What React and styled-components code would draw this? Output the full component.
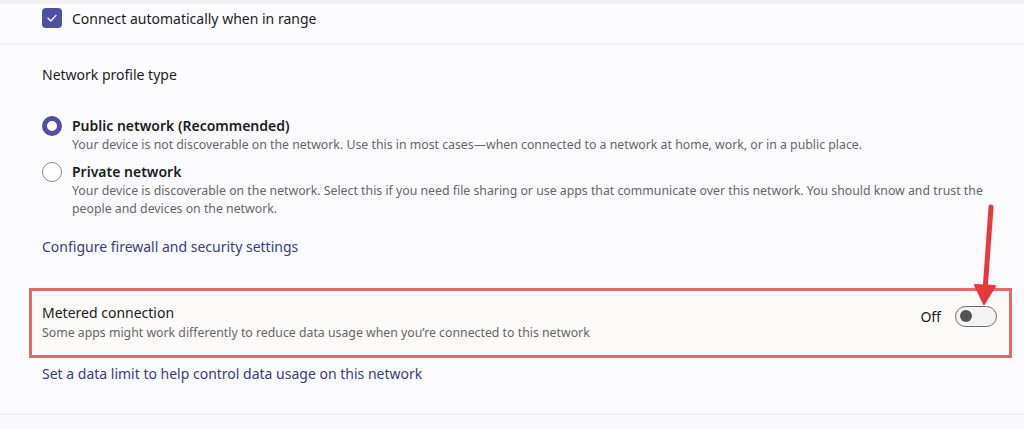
import React from 'react';
import styled, { createGlobalStyle } from 'styled-components';

const GlobalStyle = createGlobalStyle`
  body {
    margin: 0;
    background: #f9f9fb;
    font-family: "Noto Sans", "Open Sans", sans-serif;
    color: #1b1b1b;
  }
`;

const Page = styled.div`
  position: relative;
  width: 1024px;
  height: 429px;
  overflow: hidden;
  display: flex;
  flex-direction: column;
  background: #f1f1f3;
  padding-top: 4px;
  box-sizing: border-box;
`;

const Card = styled.div`
  background: #fbfbfd;
  display: flex;
  flex-direction: column;
  padding-left: 42px;
  height: ${p => p.h}px;
  margin-bottom: 2px;
  box-sizing: border-box;
  padding-top: ${p => p.pt || 0}px;
`;

const Footer = styled.div`
  flex: 1;
  background: #f8f8fa;
`;

const CheckRow = styled.label`
  display: flex;
  align-items: center;
  gap: 10px;
  font-size: 14px;
`;

const CheckBox = styled.span`
  width: 20px;
  height: 20px;
  border-radius: 4px;
  background: #4d50a3;
  display: flex;
  align-items: center;
  justify-content: center;
`;

const Heading = styled.div`
  font-size: 14px;
  margin-top: 20px;
`;

const RadioGroup = styled.div`
  display: flex;
  flex-direction: column;
  gap: 8px;
  margin-top: 32px;
`;

const RadioOption = styled.div`
  display: grid;
  grid-template-columns: 20px 1fr;
  column-gap: 10px;
  align-items: center;
`;

const Radio = styled.span`
  width: 20px;
  height: 20px;
  border-radius: 50%;
  box-sizing: border-box;
  background: #fff;
  border: ${p => (p.checked ? '5px solid #4d50a3' : '1px solid #8a8a8a')};
`;

const OptionTitle = styled.div`
  font-size: 14px;
  font-weight: 600;
  line-height: 20px;
`;

const OptionDesc = styled.div`
  grid-column: 2;
  font-size: 12.3px;
  color: #666;
  line-height: 18px;
  max-width: 930px;
`;

const Link = styled.a`
  font-size: 14px;
  color: #3b3c7e;
  text-decoration: none;
`;

const FirewallLink = styled(Link)`
  margin-top: 19px;
`;

const Highlight = styled.div`
  margin: 32px 12px 0 -13px;
  border: 3px solid #e06a6c;
  background: #fbfaf8;
  height: 70px;
  box-sizing: border-box;
  display: flex;
  align-items: center;
  padding: 0 12px 0 10px;
`;

const RowText = styled.div`
  flex: 1;
  display: flex;
  flex-direction: column;
  gap: 1px;
  margin-top: -1px;
`;

const RowTitle = styled.div`
  font-size: 14px;
  line-height: 20px;
`;

const RowDesc = styled.div`
  font-size: 12.3px;
  color: #666;
  line-height: 18px;
`;

const ToggleWrap = styled.div`
  display: flex;
  align-items: center;
  gap: 14px;
  font-size: 14px;
  margin-top: -14px;
`;

const Toggle = styled.span`
  width: 42px;
  height: 21px;
  border-radius: 11px;
  border: 1px solid #6a6a6a;
  box-sizing: border-box;
  background: #f3f3f3;
  display: flex;
  align-items: center;
  padding-left: 4px;
`;

const Thumb = styled.span`
  width: 12px;
  height: 12px;
  border-radius: 50%;
  background: #545454;
`;

const DataLink = styled(Link)`
  margin-top: 6px;
`;

const Arrow = styled.svg`
  position: absolute;
  left: 970px;
  top: 199px;
`;

export default function App() {
  return (
    <>
      <GlobalStyle />
      <Page>
        <Card h={39} pt={4}>
          <CheckRow>
            <CheckBox>
              <svg width="12" height="12" viewBox="0 0 12 12">
                <path d="M2 6.2 L4.8 9 L10 3.4" fill="none" stroke="#fff" strokeWidth="1.3" strokeLinecap="round" strokeLinejoin="round" />
              </svg>
            </CheckBox>
            Connect automatically when in range
          </CheckRow>
        </Card>
        <Card h={368} pt={0}>
          <Heading>Network profile type</Heading>
          <RadioGroup>
            <RadioOption>
              <Radio checked />
              <OptionTitle>Public network (Recommended)</OptionTitle>
              <OptionDesc>
                Your device is not discoverable on the network. Use this in most cases—when connected to a network at home, work, or in a public place.
              </OptionDesc>
            </RadioOption>
            <RadioOption>
              <Radio />
              <OptionTitle>Private network</OptionTitle>
              <OptionDesc>
                Your device is discoverable on the network. Select this if you need file sharing or use apps that communicate over this network. You should know and trust the people and devices on the network.
              </OptionDesc>
            </RadioOption>
          </RadioGroup>
          <FirewallLink>Configure firewall and security settings</FirewallLink>
          <Highlight>
            <RowText>
              <RowTitle>Metered connection</RowTitle>
              <RowDesc>Some apps might work differently to reduce data usage when you’re connected to this network</RowDesc>
            </RowText>
            <ToggleWrap>
              Off
              <Toggle>
                <Thumb />
              </Toggle>
            </ToggleWrap>
          </Highlight>
          <DataLink>Set a data limit to help control data usage on this network</DataLink>
        </Card>
        <Footer />
        <Arrow width="40" height="110" viewBox="0 0 40 110">
          <path d="M21 8 L15 92" stroke="#e8383d" strokeWidth="5" strokeLinecap="round" fill="none" />
          <path d="M5 86 L14 105 L25 87 Z" fill="#e8383d" stroke="#e8383d" strokeWidth="2" strokeLinejoin="round" />
        </Arrow>
      </Page>
    </>
  );
}
